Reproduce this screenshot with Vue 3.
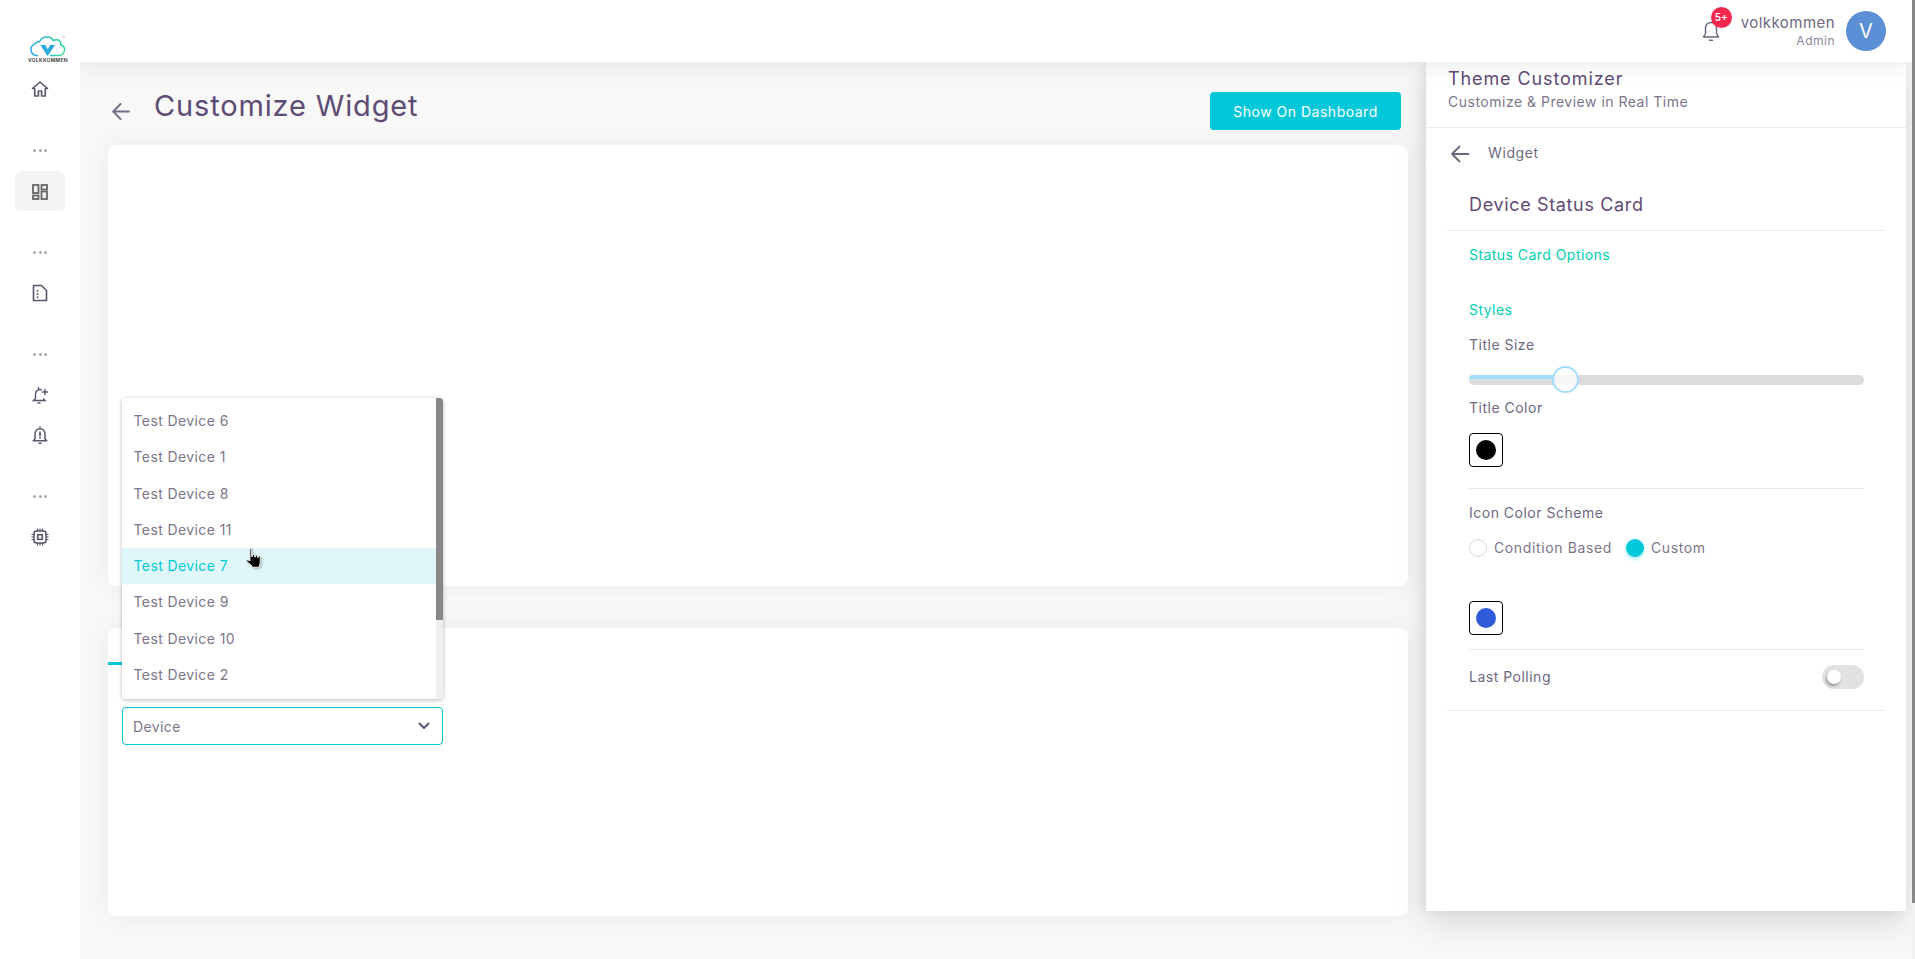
<template>
  <div class="page">
    <aside class="sidebar">
      <div class="logo">
        <svg width="38" height="23" viewBox="0 0 38 23" fill="none">
          <defs>
            <linearGradient id="cloud" x1="0" y1="0" x2="1" y2="0">
              <stop offset="0" stop-color="#2aa5e8" />
              <stop offset="0.55" stop-color="#2ec4c4" />
              <stop offset="1" stop-color="#2fd98a" />
            </linearGradient>
          </defs>
          <path d="M9 20.500H7.500a6 6 0 0 1-1.600-11.600C7 7 8.800 6.300 10.500 6.800 12 3.500 15 2 18 2c3 0 5.300 1.600 6.500 3.800 1-.9 2.400-1.300 3.800-1 2.400.5 3.700 2.600 3.500 5 2.300.7 3.700 2.700 3.700 5 0 3.500-2.500 5.700-6 5.700H21" stroke="url(#cloud)" stroke-width="1.500" />
          <path d="M11.500 10h4.800l2.400 4.300 2.500-4.300h4.800L19 20.500h-1z" fill="#27a9dc" />
          <circle cx="34.500" cy="2" r="1" stroke="#aaa" stroke-width=".5" />
        </svg>
        <span class="logo-text">VOLKKOMMEN</span>
      </div>

      <template v-for="(group, i) in navGroups" :key="i">
        <div v-if="i > 0" class="nav-dots"><i></i><i></i><i></i></div>
        <div
          v-for="item in group"
          :key="item"
          class="nav-item"
          :class="{ active: item === 'dashboard' }"
        >
          <svg v-if="item === 'home'" width="20" height="20" viewBox="0 0 20 20" fill="none" stroke="#5b5369" stroke-width="1.600" stroke-linejoin="round">
            <path d="M2.500 9.500 10 3l7.500 6.500h-2.200V17h-3.700v-5H8.400v5H4.700V9.500z" />
          </svg>
          <svg v-else-if="item === 'dashboard'" class="dash-icon" width="18" height="18" viewBox="0 0 18 18" fill="none" stroke="#666" stroke-width="1.800">
            <rect x="2" y="2" width="5.500" height="8" />
            <rect x="10.500" y="2" width="5.500" height="4.500" />
            <rect x="2" y="12.500" width="5.500" height="3.500" />
            <rect x="10.500" y="8.500" width="5.500" height="7.500" />
          </svg>
          <svg v-else-if="item === 'file'" width="18" height="20" viewBox="0 0 18 20" fill="none" stroke="#5b5369" stroke-width="1.600" stroke-linejoin="round" stroke-linecap="round">
            <path d="M2.500 2.500h8l5 5v10h-13z" />
            <path d="M6.500 7.800v.1M6.500 11v.1M6.500 14.200v.1" stroke-width="1.800" />
          </svg>
          <svg v-else-if="item === 'bellPlus'" width="20" height="20" viewBox="0 0 20 20" fill="none" stroke="#5b5369" stroke-width="1.400" stroke-linecap="round">
            <path d="M11.500 4.800A4.500 4.500 0 0 0 5.500 9v4.500L3.500 15.500h11.500L13.500 14" />
            <path d="M8.500 2.500v1M8 18h2M15 4.500v5M12.500 7h5" />
          </svg>
          <svg v-else-if="item === 'bellAlert'" width="20" height="20" viewBox="0 0 20 20" fill="none" stroke="#5b5369" stroke-width="1.500" stroke-linecap="round" stroke-linejoin="round">
            <path d="M10 3.800a5 5 0 0 0-5 5v5l-1.800 2h13.600l-1.800-2v-5a5 5 0 0 0-5-5zM10 2v1.800M9 18.300h2" />
            <path d="M10 7.500v3M10 12.800v.1" stroke-width="1.800" />
          </svg>
          <svg v-else width="20" height="20" viewBox="0 0 20 20" fill="none" stroke="#5b5369" stroke-width="1.500">
            <rect x="4" y="4" width="12" height="12" rx="2.500" />
            <rect x="7.700" y="7.700" width="4.600" height="4.600" stroke-width="1.600" />
            <path d="M7.500 1.500V4M10 1.500V4M12.500 1.500V4M7.500 16v2.500M10 16v2.500M12.500 16v2.500M1.500 7.500H4M1.500 10H4M1.500 12.500H4M16 7.500h2.500M16 10h2.500M16 12.500h2.500" stroke-width="1.200" />
          </svg>
        </div>
      </template>
    </aside>

    <div class="right">
      <header class="topbar">
        <div class="bell">
          <svg width="20" height="24" viewBox="0 0 20 24" fill="none" stroke="#6a6478" stroke-width="1.400" stroke-linecap="round" stroke-linejoin="round">
            <path d="M10 3.500a5.500 5.500 0 0 0-5.500 5.500v5.500L2.500 18h15l-2-3.500V9A5.500 5.500 0 0 0 10 3.500zM8.500 21.200h3" />
          </svg>
          <span class="badge">5+</span>
        </div>
        <div class="user">
          <div class="user-name">volkkommen</div>
          <div class="user-role">Admin</div>
        </div>
        <div class="avatar">V</div>
      </header>

      <div class="body-row">
        <main class="content">
          <div class="head">
            <svg class="back" width="20" height="18" viewBox="0 0 20 18" fill="none" stroke="#736c85" stroke-width="1.800" stroke-linecap="round" stroke-linejoin="round">
              <path d="M18 9.500H2.500M9.500 2 2.200 9.500l7.300 7.500" />
            </svg>
            <h1 class="page-title">Customize Widget</h1>
            <button class="show-btn">Show On Dashboard</button>
          </div>

          <section class="card preview"></section>

          <section class="card config">
            <div class="tabs"><span class="tab"></span></div>
            <div class="select-wrap">
              <div class="dropdown">
                <ul class="options">
                  <li
                    v-for="d in devices"
                    :key="d"
                    class="option"
                    :class="{ hover: d === hoverDevice }"
                  >{{ d }}</li>
                </ul>
                <div class="scroll-track"><div class="scroll-thumb"></div></div>
              </div>
              <div class="select">
                <span>Device</span>
                <svg width="12" height="8" viewBox="0 0 12 8" fill="none" stroke="#5f5870" stroke-width="2" stroke-linecap="round" stroke-linejoin="round">
                  <path d="M1.500 1.500 6 6l4.500-4.500" />
                </svg>
              </div>
              <svg class="cursor" width="24" height="22" viewBox="0 0 20 22" preserveAspectRatio="none">
                <path d="M6 1.200c.8 0 1.200.5 1.200 1.300v7h.8V8c0-.8 1.600-.8 1.800 0v2h.6V8.800c.2-.8 1.700-.8 1.800 0V10.500h.5V9.500c.2-.7 1.600-.7 1.700.2v5.500c0 2-.8 3-1 5H8c-.5-1.600-2.200-3.300-4.500-5.300-1-1-.4-2.300.7-2 .6.200 1 .6 1.600 1.100V2.500c0-.8.400-1.300 1.200-1.300z" fill="#000" stroke="#fff" stroke-width=".8" />
              </svg>
            </div>
          </section>
        </main>

        <aside class="panel">
          <div class="panel-head">
            <div class="panel-title">Theme Customizer</div>
            <div class="panel-sub">Customize &amp; Preview in Real Time</div>
          </div>
          <div class="panel-nav">
            <svg width="20" height="18" viewBox="0 0 20 18" fill="none" stroke="#6d667c" stroke-width="1.800" stroke-linecap="round" stroke-linejoin="round">
              <path d="M18.500 9H2.500M9.500 1.500 2 9l7.500 7.500" />
            </svg>
            <span>Widget</span>
          </div>
          <div class="widget-name">Device Status Card</div>

          <div class="panel-section">
            <div class="accent options-link">Status Card Options</div>
            <div class="accent styles-link">Styles</div>
            <div class="field-label">Title Size</div>
            <div class="slider">
              <div class="slider-fill" :style="{ width: sliderFill + 'px' }"></div>
              <div class="slider-thumb"></div>
            </div>
            <div class="field-label color-label">Title Color</div>
            <div class="swatch"><i class="swatch-dot black"></i></div>
            <div class="rule first-rule"></div>
            <div class="field-label scheme-label">Icon Color Scheme</div>
            <div class="radios">
              <label class="radio"><i class="radio-dot"></i>Condition Based</label>
              <label class="radio"><i class="radio-dot on"></i>Custom</label>
            </div>
            <div class="swatch swatch-icon"><i class="swatch-dot blue"></i></div>
            <div class="rule"></div>
            <div class="polling">
              <span class="field-label">Last Polling</span>
              <span class="toggle"><i></i></span>
            </div>
          </div>
          <div class="panel-end"></div>
        </aside>
      </div>
    </div>

    <div class="page-scroll"><div class="page-thumb"></div></div>
  </div>
</template>

<script setup>
const navGroups = [
  ['home'],
  ['dashboard'],
  ['file'],
  ['bellPlus', 'bellAlert'],
  ['chip'],
];

const devices = [
  'Test Device 6',
  'Test Device 1',
  'Test Device 8',
  'Test Device 11',
  'Test Device 7',
  'Test Device 9',
  'Test Device 10',
  'Test Device 2',
];
const hoverDevice = 'Test Device 7';
const sliderFill = 86;
</script>

<style>
html,
body {
  margin: 0;
  height: 959px;
  overflow: hidden;
  background: #f7f7f7;
}
</style>

<style scoped>
.page {
  position: relative;
  display: flex;
  height: 959px;
  font-family: Inter, "Open Sans", sans-serif;
  color: #6e6880;
  background: #f8f8f8;
  overflow: hidden;
}

/* sidebar */
.sidebar {
  width: 80px;
  flex: none;
  background: #fff;
  display: flex;
  flex-direction: column;
  align-items: center;
  padding-top: 35px;
  box-sizing: border-box;
  z-index: 3;
}

.logo {
  height: 34px;
  margin-left: 16px;
  display: flex;
  flex-direction: column;
  align-items: center;
}

.logo-text {
  font-size: 5px;
  line-height: 5px;
  font-weight: 600;
  letter-spacing: 0.300px;
  color: #333;
}

.nav-item {
  width: 50px;
  height: 40px;
  display: flex;
  align-items: center;
  justify-content: center;
  border-radius: 6px;
}

.nav-item.active {
  background: #f4f4f4;
}

.dash-icon {
  margin-top: 2px;
}

.nav-dots {
  height: 10px;
  margin: 36px 0 16px;
  display: flex;
  align-items: center;
  gap: 2.500px;
}

.nav-dots i {
  width: 3px;
  height: 3px;
  border-radius: 50%;
  background: #aaa6b4;
}

/* top bar */
.right {
  flex: 1;
  min-width: 0;
  display: flex;
  flex-direction: column;
}

.topbar {
  height: 62px;
  flex: none;
  margin-right: 3px;
  background: #fff;
  display: flex;
  align-items: center;
  justify-content: flex-end;
  padding-right: 26px;
  box-shadow: 0 4px 24px rgba(0, 0, 0, 0.08);
  position: relative;
  z-index: 2;
}

.bell {
  position: relative;
  height: 24px;
  margin-right: 20px;
}

.badge {
  position: absolute;
  left: 10px;
  top: -12px;
  width: 21px;
  height: 21px;
  border-radius: 50%;
  background: #f5274e;
  color: #fff;
  font-size: 10px;
  font-weight: 600;
  line-height: 21px;
  text-align: center;
}

.user {
  text-align: right;
  margin-right: 11px;
}

.user-name {
  font-size: 15px;
  line-height: 20px;
  letter-spacing: 0.45px;
}

.user-role {
  font-size: 12px;
  line-height: 16px;
  letter-spacing: 0.5px;
  color: #8a8598;
}

.avatar {
  width: 40px;
  height: 40px;
  border-radius: 50%;
  background: #5b8fd6;
  color: #fff;
  font-size: 20px;
  line-height: 40px;
  text-align: center;
}

/* main column */
.body-row {
  flex: 1;
  display: flex;
  min-height: 0;
}

.content {
  flex: 1;
  min-width: 0;
  padding: 0 18px 0 28px;
}

.head {
  display: flex;
  align-items: flex-start;
  padding: 30px 7px 15px 0;
  height: 38px;
  box-sizing: content-box;
}

.back {
  margin: 10px 0 0 3px;
}

.page-title {
  margin: -6px 0 0 23px;
  font-size: 29px;
  line-height: 40px;
  font-weight: 400;
  letter-spacing: 0.850px;
  color: #5e4b75;
}

.show-btn {
  margin-left: auto;
  width: 191px;
  height: 38px;
  border: none;
  border-radius: 4px;
  background: #00c8d8;
  color: #fff;
  font-family: inherit;
  font-size: 14px;
  letter-spacing: 0.500px;
}

.card {
  background: #fff;
  border-radius: 8px;
  box-shadow: 0 0 24px rgba(0, 0, 0, 0.06);
}

.preview {
  height: 441px;
  margin-bottom: 42px;
}

.config {
  height: 288px;
  padding-top: 1px;
  box-sizing: border-box;
}

.tabs {
  height: 36px;
  padding-top: 33px;
  box-sizing: border-box;
}

.tab {
  display: block;
  width: 120px;
  height: 3px;
  background: #00c8d8;
}

.select-wrap {
  position: relative;
  width: 321px;
  margin: 42px 0 0 14px;
}

.select {
  height: 38px;
  box-sizing: border-box;
  border: 1px solid #00c8d8;
  border-radius: 4px;
  background: #fff;
  display: flex;
  align-items: center;
  justify-content: space-between;
  padding: 0 12px 0 10px;
  font-size: 14px;
  letter-spacing: 0.400px;
  color: #7b7589;
}

.dropdown {
  position: absolute;
  left: 0;
  bottom: calc(100% + 8px);
  width: 100%;
  height: 301px;
  box-sizing: border-box;
  background: #fff;
  border-radius: 4px;
  box-shadow: 0 1px 4px rgba(0, 0, 0, 0.28);
  display: flex;
  overflow: hidden;
  z-index: 2;
}

.options {
  flex: 1;
  list-style: none;
  margin: 0;
  padding: 5px 0 0;
}

.option {
  height: 36.300px;
  line-height: 36.300px;
  padding-left: 11.500px;
  font-size: 14px;
  letter-spacing: 0.400px;
  color: #7b7589;
}

.option.hover {
  background: #e0f7fa;
  color: #00c8d8;
}

.scroll-track {
  width: 7px;
  background: #efefef;
}

.scroll-thumb {
  height: 222px;
  background: #888;
}

.cursor {
  position: absolute;
  left: 121px;
  top: -160px;
  z-index: 3;
  filter: drop-shadow(1px 1px 1px rgba(0, 0, 0, 0.3));
}

/* customizer panel */
.panel {
  width: 480px;
  flex: none;
  height: 849px;
  margin-right: 9px;
  background: #fff;
  box-shadow: 0 12px 30px rgba(0, 0, 0, 0.13), -4px 0 10px rgba(0, 0, 0, 0.06);
  position: relative;
  z-index: 1;
}

.panel-head {
  height: 66px;
  box-sizing: border-box;
  padding: 6px 22px 0;
  border-bottom: 1px solid #ebe9f1;
}

.panel-title {
  font-size: 18px;
  line-height: 22px;
  font-weight: 400;
  letter-spacing: 0.900px;
  color: #5e4b75;
}

.panel-sub {
  font-size: 14px;
  line-height: 20px;
  margin-top: 2px;
  letter-spacing: 0.500px;
  color: #7b7589;
}

.panel-nav {
  height: 52px;
  display: flex;
  align-items: center;
  padding-left: 24px;
  gap: 18px;
  font-size: 14px;
  letter-spacing: 0.600px;
}

.panel-nav span {
  margin-top: -3px;
}

.widget-name {
  margin: 0 21px;
  height: 51px;
  box-sizing: border-box;
  padding: 14px 0 0 22px;
  border-bottom: 1px solid #ebe9f1;
  font-size: 18px;
  line-height: 22px;
  font-weight: 400;
  letter-spacing: 0.650px;
  color: #5e4b75;
}

.panel-section {
  padding: 0 42px 0 43px;
}

.accent {
  font-size: 14px;
  line-height: 20px;
  font-weight: 400;
  letter-spacing: 0.450px;
  color: #00d0b0;
}

.options-link {
  margin-top: 14px;
}

.styles-link {
  margin-top: 35px;
}

.field-label {
  font-size: 14px;
  line-height: 20px;
  letter-spacing: 0.500px;
  color: #6e6880;
}

.styles-link + .field-label {
  margin-top: 15px;
}

.slider {
  position: relative;
  height: 10px;
  margin-top: 20px;
  border-radius: 5px;
  background: #dcdcdc;
}

.slider-fill {
  height: 4px;
  border-radius: 4px 0 0 0;
  background: #a6dcfb;
}

.slider-thumb {
  position: absolute;
  left: 83px;
  top: -9px;
  width: 27px;
  height: 27px;
  box-sizing: border-box;
  border: 2px solid #a6dcfb;
  border-radius: 50%;
  background: rgba(255, 255, 255, 0.75);
}

.color-label {
  margin-top: 13px;
}

.swatch {
  width: 34px;
  height: 34px;
  box-sizing: border-box;
  margin-top: 15px;
  border: 1px solid #000;
  border-radius: 4px;
  display: flex;
  align-items: center;
  justify-content: center;
}

.swatch-dot {
  width: 20px;
  height: 20px;
  border-radius: 50%;
}

.swatch-dot.black {
  background: #000;
}

.swatch-dot.blue {
  background: #2f5bdb;
}

.rule {
  height: 1px;
  margin-top: 14px;
  background: #e9e8ee;
}

.first-rule {
  margin-top: 21px;
}

.scheme-label {
  margin-top: 14px;
}

.radios {
  display: flex;
  gap: 14px;
  margin-top: 15px;
}

.radio {
  display: flex;
  align-items: center;
  gap: 7px;
  font-size: 14px;
  line-height: 20px;
  letter-spacing: 0.620px;
  color: #7b7589;
}

.radio-dot {
  width: 18px;
  height: 18px;
  box-sizing: border-box;
  border: 1px solid #d8d6de;
  border-radius: 50%;
}

.radio-dot.on {
  border: none;
  background: #00c8d8;
  box-shadow: 0 2px 4px rgba(0, 200, 216, 0.4);
}

.swatch-icon {
  margin-top: 43px;
}

.polling {
  display: flex;
  align-items: center;
  justify-content: space-between;
  margin-top: 15px;
}

.toggle {
  position: relative;
  width: 42px;
  height: 24px;
  border-radius: 12px;
  background: #e2e2e2;
}

.toggle i {
  position: absolute;
  left: 5px;
  top: 5px;
  width: 14px;
  height: 14px;
  border-radius: 50%;
  background: #fff;
  box-shadow: -1px 2px 3px rgba(0, 0, 0, 0.35);
}

.panel-end {
  height: 1px;
  margin: 21px 21px 0;
  background: #ebe9f1;
}

/* page scrollbar */
.page-scroll {
  position: absolute;
  right: 0;
  top: 0;
  width: 3px;
  height: 959px;
  background: #f1f1f1;
  z-index: 4;
}

.page-thumb {
  height: 903px;
  background: #888;
}
</style>
